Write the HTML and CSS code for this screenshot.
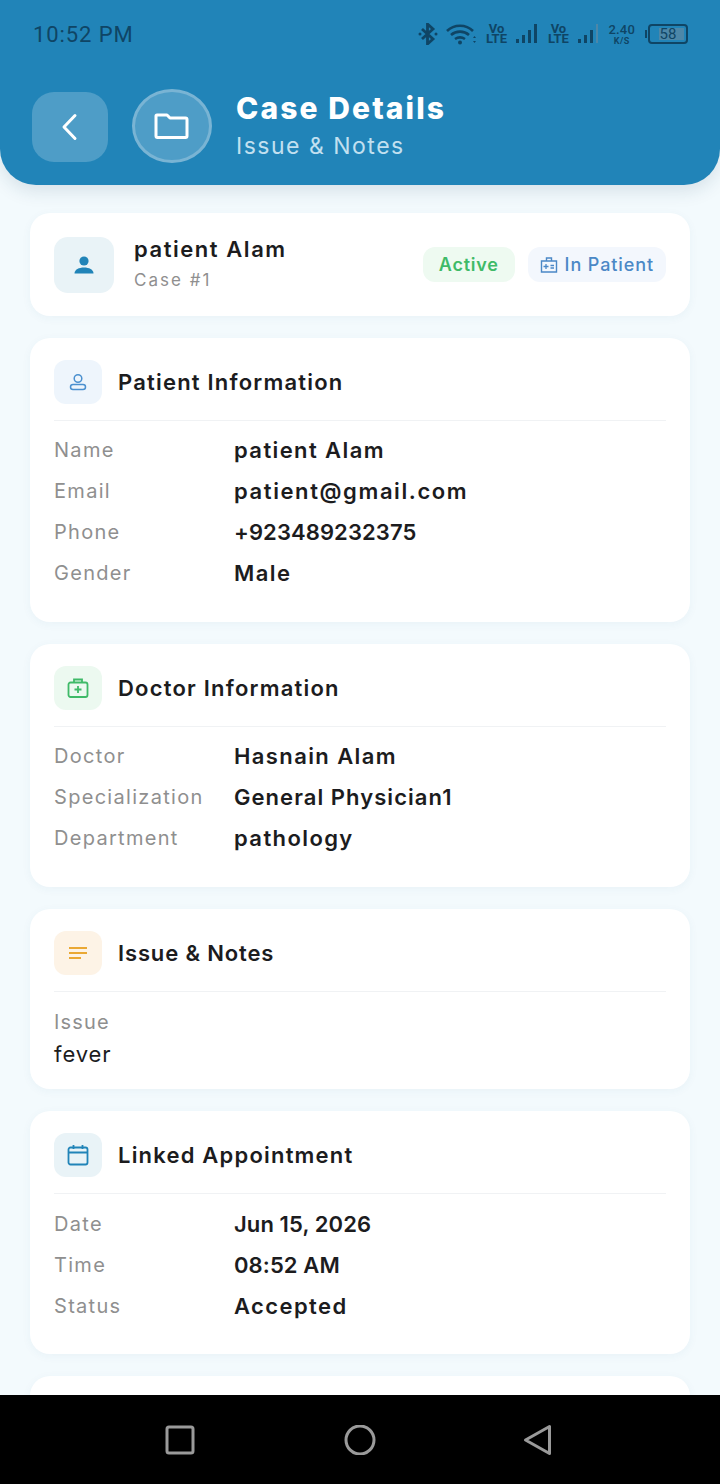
FILE: index.html
```html
<!DOCTYPE html>
<html lang="en">
<head>
<meta charset="utf-8">
<title>Case Details</title>
<link rel="stylesheet" href="styles.css">
</head>
<body>
<div class="screen">
  <header class="header">
    <div class="status">
      <span class="time">10:52 PM</span>
      <div class="status-icons">
        <svg class="si" width="20" height="22" viewBox="0 0 20 22"><path d="M4 6l11 10-5.500 5V1L15 6 4 16" fill="none" stroke="#0f4565" stroke-width="2.800"/><circle cx="2" cy="11" r="1.500" fill="#0f4565"/><circle cx="18" cy="11" r="1.500" fill="#0f4565"/></svg>
        <svg class="si" width="30" height="22" viewBox="0 0 30 22"><path d="M1 8c7-7 19-7 26 0M5 12c5-4.500 13-4.500 18 0M9 16c3-2 7-2 10 0" fill="none" stroke="#0f4565" stroke-width="2.600"/><circle cx="14" cy="19.500" r="2" fill="#0f4565"/><path d="M27 15l1.500-2 1.500 2zM27 18l1.500 2 1.500-2z" fill="#0f4565"/></svg>
        <span class="volte"><span>Vo</span><span>LTE</span></span>
        <svg class="si" width="22" height="22" viewBox="0 0 22 22"><g fill="#0f4565"><rect x="0" y="16" width="3" height="4"/><rect x="6" y="12" width="3" height="8"/><rect x="12" y="7" width="3" height="13"/><rect x="18" y="1" width="3" height="19"/></g></svg>
        <span class="volte"><span>Vo</span><span>LTE</span></span>
        <svg class="si" width="22" height="22" viewBox="0 0 22 22"><g fill="#0f4565"><rect x="0" y="16" width="3" height="4"/><rect x="6" y="12" width="3" height="8"/><rect x="12" y="7" width="3" height="13"/></g><rect x="18" y="1" width="2" height="19" fill="#4d87a8"/></svg>
        <span class="speed"><b>2.40</b><i>K/S</i></span>
        <span class="battery"><span class="battery-fill"></span><span class="battery-num">58</span></span>
      </div>
    </div>
    <div class="title-row">
      <button class="back" aria-label="Back">
        <svg width="24" height="28" viewBox="0 0 24 28"><path d="M17 2.500L6 14l11 11.500" fill="none" stroke="#fff" stroke-width="3" stroke-linecap="round" stroke-linejoin="round"/></svg>
      </button>
      <div class="folder">
        <svg width="36" height="28" viewBox="0 0 36 28"><path d="M3 3h10l3 3h15.500a1.500 1.500 0 0 1 1.500 1.500V24a1.500 1.500 0 0 1-1.500 1.500h-28A1.500 1.500 0 0 1 2 24V4a1 1 0 0 1 1-1z" fill="none" stroke="#fff" stroke-width="3" stroke-linejoin="round"/></svg>
      </div>
      <div class="titles">
        <h1>Case Details</h1>
        <p>Issue &amp; Notes</p>
      </div>
    </div>
  </header>

  <main class="content">
    <section class="card summary">
      <div class="avatar">
        <svg width="24" height="24" viewBox="0 0 24 24"><circle cx="12" cy="8" r="4.600" fill="#2184b8"/><path d="M2.500 20.500c0-4 4.500-6 9.500-6s9.500 2 9.500 6z" fill="#2184b8"/></svg>
      </div>
      <div class="who">
        <div class="who-name">patient Alam</div>
        <div class="who-case">Case #1</div>
      </div>
      <span class="badge active">Active</span>
      <span class="badge inpatient">
        <svg width="18" height="18" viewBox="0 0 18 18"><path d="M1.500 5h15v11h-15zM6.500 5V2h5v3" fill="none" stroke="#4b88c6" stroke-width="1.400"/><path d="M3.500 10.500h5M6 8v5M10.500 9.500h3.500M10.500 12h3.500" stroke="#4b88c6" stroke-width="1.300" fill="none"/></svg>
        In Patient
      </span>
    </section>

    <section class="card">
      <div class="card-head">
        <span class="ico ico-blue">
          <svg width="20" height="20" viewBox="0 0 20 20"><circle cx="10" cy="6.500" r="3.800" fill="none" stroke="#4b90cf" stroke-width="1.500"/><rect x="2.500" y="12.500" width="15" height="5" rx="2.500" fill="none" stroke="#4b90cf" stroke-width="1.500"/></svg>
        </span>
        <h2>Patient Information</h2>
      </div>
      <dl class="rows">
        <div class="row"><dt>Name</dt><dd>patient Alam</dd></div>
        <div class="row"><dt>Email</dt><dd class="wide">patient@gmail.com</dd></div>
        <div class="row"><dt>Phone</dt><dd class="num">+923489232375</dd></div>
        <div class="row"><dt>Gender</dt><dd>Male</dd></div>
      </dl>
    </section>

    <section class="card">
      <div class="card-head">
        <span class="ico ico-green">
          <svg width="22" height="22" viewBox="0 0 22 22"><rect x="1.500" y="5.500" width="19" height="14.500" rx="2" fill="none" stroke="#3fba68" stroke-width="1.800"/><path d="M7 5.500V2.500h8v3M11 9v7M7.500 12.500h7" fill="none" stroke="#3fba68" stroke-width="1.800"/></svg>
        </span>
        <h2>Doctor Information</h2>
      </div>
      <dl class="rows">
        <div class="row"><dt>Doctor</dt><dd>Hasnain Alam</dd></div>
        <div class="row"><dt>Specialization</dt><dd class="mid">General Physician1</dd></div>
        <div class="row"><dt>Department</dt><dd>pathology</dd></div>
      </dl>
    </section>

    <section class="card">
      <div class="card-head">
        <span class="ico ico-orange">
          <svg width="20" height="14" viewBox="0 0 20 14"><path d="M1 2h18M1 7h18M1 12h12" fill="none" stroke="#eaa834" stroke-width="2"/></svg>
        </span>
        <h2 class="tight">Issue &amp; Notes</h2>
      </div>
      <div class="note">
        <div class="note-label">Issue</div>
        <div class="note-text">fever</div>
      </div>
    </section>

    <section class="card">
      <div class="card-head">
        <span class="ico ico-teal">
          <svg width="22" height="22" viewBox="0 0 22 22"><rect x="1.500" y="3.500" width="19" height="17" rx="2" fill="none" stroke="#2184b8" stroke-width="1.800"/><path d="M1.500 8.500h19M6.500 1v4M15.500 1v4" fill="none" stroke="#2184b8" stroke-width="1.800"/></svg>
        </span>
        <h2>Linked Appointment</h2>
      </div>
      <dl class="rows rows-low">
        <div class="row"><dt>Date</dt><dd class="num">Jun 15, 2026</dd></div>
        <div class="row"><dt>Time</dt><dd class="num">08:52 AM</dd></div>
        <div class="row"><dt>Status</dt><dd>Accepted</dd></div>
      </dl>
    </section>

    <section class="card stub"></section>
  </main>

  <nav class="navbar">
    <svg width="30" height="30" viewBox="0 0 30 30"><rect x="2" y="2" width="26" height="26" rx="2" fill="none" stroke="#9a9a9a" stroke-width="3"/></svg>
    <svg width="32" height="30" viewBox="0 0 32 30"><circle cx="16" cy="15" r="14" fill="none" stroke="#9a9a9a" stroke-width="3"/></svg>
    <svg width="30" height="32" viewBox="0 0 30 32"><path d="M26.500 2.500v27L2.500 16z" fill="none" stroke="#9a9a9a" stroke-width="3" stroke-linejoin="round"/></svg>
  </nav>
</div>
</body>
</html>
```
FILE: styles.css
```css
* { box-sizing: border-box; }
html, body { margin: 0; padding: 0; }
body { font-family: "Inter", "Liberation Sans", sans-serif; background: #f3fafd; }
.screen { width: 720px; height: 1484px; display: flex; flex-direction: column; overflow: hidden; }

.header { height: 185px; flex: none; background: #2184b8; border-radius: 0 0 36px 36px; box-shadow: 0 6px 18px rgba(20, 60, 90, .13); padding: 0 32px; position: relative; z-index: 1; }
.status { height: 68px; display: flex; align-items: center; justify-content: space-between; }
.time { font-family: "Roboto", sans-serif; font-size: 22px; letter-spacing: .9px; color: #0f4565; margin-left: 1px; }
.status-icons { display: flex; align-items: center; gap: 8px; }
.si { display: block; }
.volte { display: flex; flex-direction: column; align-items: center; margin: 0 1.500px; font-family: "Roboto", sans-serif; font-size: 13px; font-weight: 700; color: #0f4565; }
.volte span { display: block; height: 10px; line-height: 10px; }
.speed { display: flex; flex-direction: column; align-items: center; font-family: "Roboto", sans-serif; color: #0f4565; }
.speed b { font-size: 13px; line-height: 13px; font-weight: 500; letter-spacing: .2px; }
.speed i { font-size: 9px; line-height: 10px; font-style: normal; font-weight: 700; letter-spacing: .5px; }
.battery { width: 40px; height: 20px; border: 2px solid #0f4565; border-radius: 4px; position: relative; margin-left: 5px; display: flex; align-items: center; justify-content: center; }
.battery::before { content: ""; position: absolute; left: -5px; top: 4px; width: 2px; height: 8px; background: #0f4565; }
.battery-fill { position: absolute; top: 2px; bottom: 2px; left: 9px; right: 2px; background: #4d87a8; }
.battery-num { position: relative; font-family: "Roboto", sans-serif; font-size: 15px; color: #0f4565; }

.title-row { display: flex; align-items: center; margin-top: 21px; }
.back { width: 76px; height: 70px; border: 0; padding: 0; border-radius: 22px; background: #4e9dc7; display: flex; align-items: center; justify-content: center; margin-top: 1px; }
.folder { width: 80px; height: 74px; border-radius: 50%; background: #4e9dc7; border: 3px solid #79b4d4; margin-left: 24px; display: flex; align-items: center; justify-content: center; }
.titles { margin-left: 24px; margin-top: -3px; }
.titles h1 { margin: 0; font-size: 30px; line-height: 36px; font-weight: 800; color: #fff; letter-spacing: 2.1px; }
.titles p { margin: 6px 0 0; font-size: 23px; line-height: 28px; font-weight: 400; color: #c2e0f0; letter-spacing: 1.5px; }

.content { flex: 1; min-height: 0; overflow: hidden; padding: 28px 30px 0; display: flex; flex-direction: column; gap: 22px; }
.card { flex: none; background: #fff; border-radius: 20px; padding: 22px 24px; box-shadow: 0 2px 10px rgba(30, 90, 130, .05); }
.summary { height: 103px; padding: 0 24px; display: flex; align-items: center; }
.avatar { width: 60px; height: 56px; border-radius: 14px; background: #e9f3f7; display: flex; align-items: center; justify-content: center; }
.who { margin-left: 20px; flex: 1; margin-top: -2px; }
.who-name { font-size: 22px; line-height: 28px; font-weight: 600; color: #1c1c1e; letter-spacing: 1.55px; }
.who-case { font-size: 17px; line-height: 24px; margin-top: 5px; color: #8f8f8f; letter-spacing: 2px; }
.badge { height: 35px; border-radius: 12px; display: flex; align-items: center; font-size: 18px; font-weight: 600; letter-spacing: .75px; }
.active { background: #eefaf1; color: #3fba68; padding: 0 16px; }
.inpatient { background: #f3f7fd; color: #4b88c6; padding: 0 12px; margin-left: 13px; gap: 7px; font-weight: 500; letter-spacing: .9px; }

.card-head { display: flex; align-items: center; gap: 16px; padding-bottom: 16px; border-bottom: 1px solid #f0f2f4; }
.card-head h2 { margin: 0; font-size: 22px; line-height: 28px; font-weight: 600; color: #1c1c1e; letter-spacing: 1.2px; }
.card-head h2.tight { letter-spacing: .85px; }
.ico { width: 48px; height: 44px; border-radius: 12px; display: flex; align-items: center; justify-content: center; }
.ico-blue { background: #eef5fc; }
.ico-green { background: #ecf9f0; }
.ico-orange { background: #fdf3e6; }
.ico-teal { background: #e9f3f7; }

.rows { margin: 8px 0 0; padding: 0 0 7px; }
.rows-low { margin-top: 9px; padding-bottom: 6px; }
.row { display: flex; align-items: center; height: 41px; }
.row dt { width: 180px; font-size: 20px; color: #8f8f8f; letter-spacing: 1.3px; }
.row dd { margin: 0; font-size: 22px; font-weight: 600; color: #1c1c1e; letter-spacing: 1.4px; }
.row dd.num { letter-spacing: .1px; }
.row dd.wide { letter-spacing: 1.6px; }
.row dd.mid { letter-spacing: 1.05px; }

.note { padding-top: 17px; margin-bottom: -3px; }
.note-label { font-size: 20px; line-height: 26px; color: #8f8f8f; letter-spacing: 1.2px; }
.note-text { font-size: 22px; line-height: 32px; margin-top: 3px; color: #1c1c1e; letter-spacing: .9px; }
.stub { height: 60px; }

.navbar { height: 89px; flex: none; background: #000; position: relative; z-index: 2; display: flex; align-items: center; }
.navbar svg:nth-child(1) { margin-left: 165px; }
.navbar svg:nth-child(2) { margin-left: 149px; }
.navbar svg:nth-child(3) { margin-left: 147px; }
```
